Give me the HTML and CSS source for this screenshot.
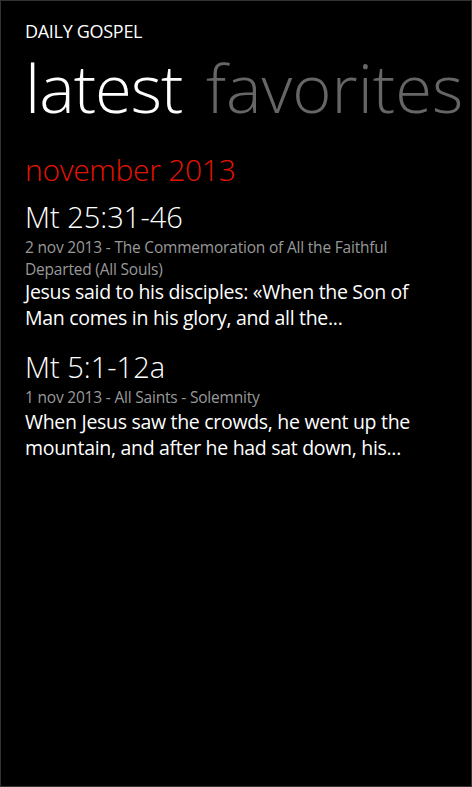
FILE: index.html
```html
<!DOCTYPE html>
<html>
<head>
<meta charset="utf-8">
<link rel="stylesheet" href="styles.css">
</head>
<body>
<div class="screen">
  <div class="app-title">DAILY GOSPEL</div>
  <div class="pivot-headers">
    <span class="pivot-item active">latest</span>
    <span class="pivot-item">favorites</span>
  </div>
  <div class="group-header">november 2013</div>
  <div class="entry">
    <div class="ref">Mt 25:31-46</div>
    <div class="meta">2 nov 2013 - The Commemoration of All the Faithful Departed (All Souls)</div>
    <div class="excerpt">Jesus said to his disciples: «When the Son of Man comes in his glory, and all the...</div>
  </div>
  <div class="entry">
    <div class="ref">Mt 5:1-12a</div>
    <div class="meta">1 nov 2013 - All Saints - Solemnity</div>
    <div class="excerpt">When Jesus saw the crowds, he went up the mountain, and after he had sat down, his...</div>
  </div>
</div>
</body>
</html>
```

FILE: styles.css
```css
html, body {
  margin: 0;
  padding: 0;
  background: #000;
}
.screen {
  box-sizing: border-box;
  width: 472px;
  height: 787px;
  border: 1px solid #333;
  background: #000;
  color: #fff;
  font-family: "Open Sans", "Noto Sans", sans-serif;
  padding: 18px 30px 0 24px;
  overflow: hidden;
}
.app-title {
  font-size: 18px;
  line-height: 24px;
  letter-spacing: -0.3px;
}
.pivot-headers {
  white-space: nowrap;
  font-weight: 300;
  font-size: 67px;
  line-height: 80px;
  margin-top: 4px;
}
.pivot-item {
  color: #666;
  margin-right: 6px;
  letter-spacing: 0;
}
.pivot-item.active {
  color: #fff;
  letter-spacing: -1px;
}
.group-header {
  color: #e51400;
  font-size: 30px;
  line-height: 40px;
  margin-top: 23px;
  font-weight: 300;
  letter-spacing: -0.3px;
}
.entry {
  margin-bottom: 18px;
}
.ref {
  font-size: 29px;
  line-height: 36px;
  margin-top: 9px;
  font-weight: 300;
}
.entry + .entry .ref {
  margin-top: 0;
}
.meta {
  color: #999;
  font-size: 15.5px;
  line-height: 22px;
  margin-top: 1px;
  letter-spacing: -0.2px;
}
.excerpt {
  font-size: 19.5px;
  line-height: 26px;
  margin-top: -1px;
  letter-spacing: -0.3px;
}
.entry + .entry .excerpt {
  margin-top: 1px;
}
```
